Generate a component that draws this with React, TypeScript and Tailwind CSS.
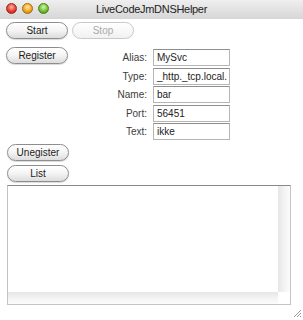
import React from 'react';

const font = { fontFamily: '"Liberation Sans", Arial, sans-serif' };

function PillButton({ label, disabled = false }: { label: string; disabled?: boolean }) {
    return (
        <div
            className={
                'w-[62px] h-[17px] rounded-full border flex items-center justify-center text-[10px] leading-none ' +
                (disabled
                    ? 'border-[#c9c9c9] text-[#a9a9a9] bg-gradient-to-b from-[#ffffff] to-[#f1f1f1]'
                    : 'border-[#8d8d8d] text-[#1a1a1a] bg-gradient-to-b from-[#ffffff] via-[#f4f4f4] to-[#dcdcdc] shadow-[0_1px_1px_rgba(0,0,0,0.15)]')
            }
        >
            {label}
        </div>
    );
}

export default function App() {
    const fields = [
        { label: 'Alias:', value: 'MySvc' },
        { label: 'Type:', value: '_http._tcp.local.' },
        { label: 'Name:', value: 'bar' },
        { label: 'Port:', value: '56451' },
        { label: 'Text:', value: 'ikke' },
    ];

    return (
        <div className="w-[303px] h-[320px] bg-white flex flex-col overflow-hidden" style={font}>
            {/* title bar */}
            <div className="h-[19px] shrink-0 relative flex items-center justify-center bg-gradient-to-b from-[#efefef] to-[#d6d6d6]">
                <div className="absolute left-[6px] top-[3px] flex gap-[5px]">
                    <span className="w-[11px] h-[11px] rounded-full bg-[radial-gradient(circle_at_50%_35%,#ffb3a8,#e2372a_60%,#a9190f)] border border-[#9b2a20]" />
                    <span className="w-[11px] h-[11px] rounded-full bg-[radial-gradient(circle_at_50%_35%,#ffe6a0,#f0a318_60%,#b06e05)] border border-[#a06a12]" />
                    <span className="w-[11px] h-[11px] rounded-full bg-[radial-gradient(circle_at_50%_35%,#d4f5a8,#6cbd2c_60%,#3d7f12)] border border-[#47801f]" />
                </div>
                <span className="text-[11px] tracking-[-0.3px] text-[#222]">LiveCodeJmDNSHelper</span>
            </div>

            <div className="flex gap-[4px] pl-[6px] mt-[3px]">
                <PillButton label="Start" />
                <PillButton label="Stop" disabled />
            </div>

            <div className="flex mt-[8px]">
                <div className="pl-[6px]">
                    <PillButton label="Register" />
                </div>
                <div className="ml-[40px] mt-[2px] flex flex-col gap-[1.5px]">
                    {fields.map((f) => (
                        <div key={f.label} className="flex items-center">
                            <span className="w-[39px] text-right text-[10px] text-[#3c3c3c]">{f.label}</span>
                            <div className="ml-[6px] w-[77px] h-[17px] border border-[#b5b5b5] border-t-[#8e8e8e] flex items-center px-[3px] text-[10px] text-[#222] overflow-hidden whitespace-nowrap">
                                {f.value}
                            </div>
                        </div>
                    ))}
                </div>
            </div>

            <div className="flex flex-col gap-[4px] pl-[7px] mt-[4px]">
                <PillButton label="Unegister" />
                <PillButton label="List" />
            </div>

            <div className="ml-[7px] mt-[3px] w-[284px] h-[120px] shrink-0 border border-[#c4c4c4] border-t-[#8a8a8a] bg-[#fafafa] flex flex-col">
                <div className="flex flex-1">
                    <div className="flex-1 bg-white shadow-[2px_2px_3px_rgba(0,0,0,0.22)]" />
                    <div className="w-[12px] bg-gradient-to-r from-[#e6e6e6] via-[#f3f3f3] to-[#fbfbfb]" />
                </div>
                <div className="h-[12px] flex">
                    <div className="flex-1 bg-gradient-to-b from-[#e6e6e6] via-[#f3f3f3] to-[#fbfbfb]" />
                    <div className="w-[12px] bg-white" />
                </div>
            </div>

            <div className="flex justify-end pr-[1px] mt-[3px]">
                <svg width="10" height="10" viewBox="0 0 10 10">
                    <path d="M9 2 L2 9 M9 5 L5 9 M9 8 L8 9" stroke="#9a9a9a" strokeWidth="1" />
                </svg>
            </div>
        </div>
    );
}
